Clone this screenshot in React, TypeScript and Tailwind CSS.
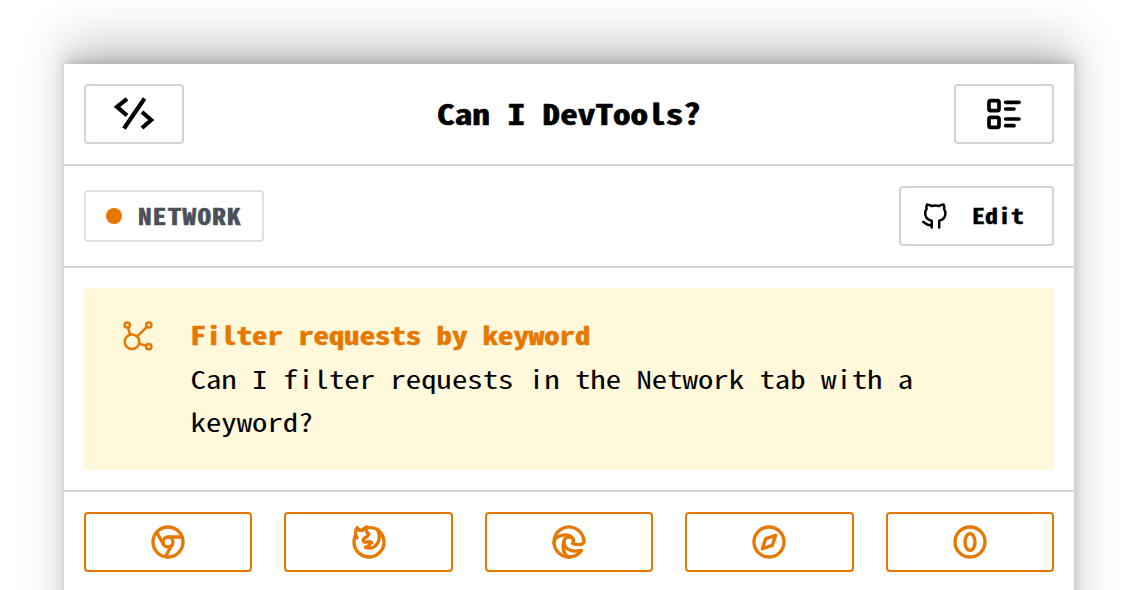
import type { ReactNode } from 'react';
import { TbBrandChrome, TbBrandFirefox, TbBrandEdge, TbBrandSafari, TbBrandOpera, TbListDetails } from 'react-icons/tb';

function CodeIcon() {
  return (
    <svg width="48" height="48" viewBox="0 0 48 48" fill="none" stroke="#000" strokeWidth="4.200">
      <path d="M17 8.800 L7 16.800 L17 25.500 M34.500 8.500 L14 38.500 M32 22 L41.200 30 L32 38" />
    </svg>
  );
}

function GithubIcon() {
  return (
    <svg width="32" height="32" viewBox="0 0 32 32" fill="none" stroke="#000" strokeWidth="2.500" strokeLinecap="round" strokeLinejoin="round">
      <path d="M12.700 27.500V20.700C8 19.800 6.200 16.500 6.200 13.300C6.200 11.500 6.600 10.200 7.600 9C7.200 7.400 7.400 5.800 8 4.500C9.600 4.500 11.200 5.200 12.400 6.100C14.800 5.500 17.800 5.500 20.200 6.100C21.400 5.200 23 4.500 24.600 4.500C25.200 5.800 25.400 7.400 25 9C26 10.200 26.400 11.500 26.400 13.300C26.400 16.500 24.700 19.800 20.200 20.700V27.500" />
      <path d="M4.200 22C6.500 22.500 7.200 26 12.700 25.200" />
    </svg>
  );
}

function NetworkIcon() {
  return (
    <svg width="32" height="32" viewBox="0 0 32 32" fill="none" stroke="currentColor" strokeWidth="2.500">
      <circle cx="10" cy="21.700" r="7.300" />
      <circle cx="5.200" cy="5" r="2.600" />
      <circle cx="26.800" cy="5" r="2.600" />
      <circle cx="26.800" cy="26.700" r="2.600" />
      <path d="M6 7.500 L8 14.600 M24.900 6.900 L15.300 16.300 M17.100 23.700 L24.300 25.900" />
    </svg>
  );
}

function BrowserTab({ children }: { children: ReactNode }) {
  return (
    <button className="flex h-[60px] flex-1 items-center justify-center rounded-sm border-2 border-[#e67700]">
      {children}
    </button>
  );
}

export default function App() {
  return (
    <main className="h-[590px] overflow-hidden bg-white px-16 pt-16 font-['Noto_Sans_Mono_CJK_SC','DejaVu_Sans_Mono',monospace] text-black">
      <div className="h-[700px] w-[1012px] border-r-2 border-[#ced4da] bg-white shadow-[0_-26px_46px_-2px_rgba(0,0,0,0.2),0_-8px_14px_-1px_rgba(0,0,0,0.14),0_-2px_4px_rgba(0,0,0,0.05)]">
        <header className="flex h-[102px] items-center justify-between border-b-2 border-[#ced4da] px-5">
          <button className="flex h-[60px] w-[100px] items-center justify-center rounded-sm border-2 border-[#ced4da]">
            <CodeIcon />
          </button>
          <h1 className="mb-[3px] scale-y-[0.805] text-[35.200px] leading-none font-bold [-webkit-text-stroke:0.7px_currentColor]">Can I DevTools?</h1>
          <button className="flex h-[60px] w-[100px] items-center justify-center rounded-sm border-2 border-[#ced4da]">
            <TbListDetails size={40} className="[stroke-width:2.200]" />
          </button>
        </header>
        <div className="flex h-[102px] items-center justify-between border-b-2 border-[#ced4da] px-5">
          <div className="flex h-[52px] w-[180px] items-center gap-4 rounded-sm border-2 border-[#dee2e6] pl-5 text-[27.200px] leading-none font-bold tracking-[1.250px] text-[#495057]">
            <span className="size-4 rounded-full bg-[#e67700]" />
            <span className="scale-y-[0.805] [-webkit-text-stroke:0.7px_currentColor]">NETWORK</span>
          </div>
          <button className="flex h-[60px] w-[155px] items-center gap-[21px] rounded-sm border-2 border-[#ced4da] pl-[18px] text-[26px] leading-none font-bold">
            <GithubIcon />
            <span className="mb-[3px] scale-y-[0.805] [-webkit-text-stroke:0.4px_currentColor]">Edit</span>
          </button>
        </div>
        <section className="h-[224px] border-b-2 border-[#ced4da] p-5">
          <div className="flex h-[182px] rounded-sm bg-[#fff8db] pt-[25px] pl-[38px]">
            <div className="w-[68.500px] pt-[7px] text-[#e67700]">
              <NetworkIcon />
            </div>
            <div className="w-[780px] origin-top scale-y-[0.805] text-[30.760px] leading-[54px]">
              <h2 className="font-bold text-[#e67700] [-webkit-text-stroke:0.6px_currentColor]">Filter requests by keyword</h2>
              <p>Can I filter requests in the Network tab with a keyword?</p>
            </div>
          </div>
        </section>
        <nav className="flex gap-8 p-5 text-[#e67700]">
          <BrowserTab><TbBrandChrome size={40} /></BrowserTab>
          <BrowserTab><TbBrandFirefox size={40} /></BrowserTab>
          <BrowserTab><TbBrandEdge size={40} /></BrowserTab>
          <BrowserTab><TbBrandSafari size={40} /></BrowserTab>
          <BrowserTab><TbBrandOpera size={40} /></BrowserTab>
        </nav>
      </div>
    </main>
  );
}
